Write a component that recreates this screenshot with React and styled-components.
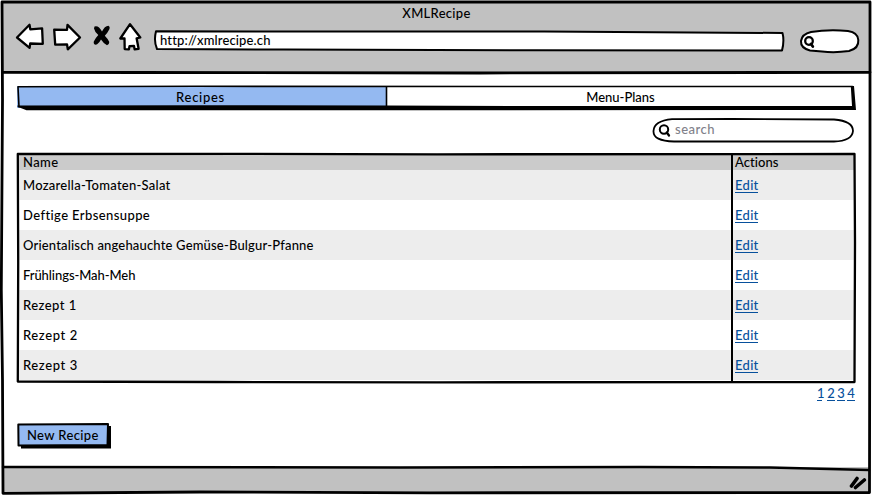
import React from 'react';
import styled, { createGlobalStyle } from 'styled-components';

const GlobalStyle = createGlobalStyle`
  * { box-sizing: border-box; }
  body { margin: 0; background: #fff; }
`;

const Browser = styled.div`
  position: relative;
  width: 872px;
  height: 495px;
  display: flex;
  flex-direction: column;
  padding: 2px 3px;
  background: #fff;
  color: #000;
  font: 500 13px/16px Lato, sans-serif;
  font-variant-ligatures: none;
`;

/* Hand-drawn outline laid over the box it decorates. */
const Sketch = styled.svg`
  position: absolute;
  inset: 0;
  width: 100%;
  height: 100%;
  overflow: visible;
  pointer-events: none;
  fill: none;
  stroke: #000;
  stroke-width: 2;
  stroke-linejoin: round;
  stroke-linecap: round;
`;

const Text = styled.span`
  position: relative;
  letter-spacing: ${(p) => p.$track || 0}px;
  white-space: pre;
`;

const Chrome = styled.header`
  height: 70px;
  background: #c1c1c1;
`;

const Title = styled.h1`
  margin: 0;
  padding: 3px 0 0 1px;
  height: 20px;
  font: inherit;
  text-align: center;
`;

const Toolbar = styled.div`
  display: flex;
  align-items: flex-start;
  padding-left: 12px;
`;

const NavIcons = styled.svg`
  width: 128px;
  height: 34px;
  margin-right: 11px;
  fill: #fff;
  stroke: #000;
  stroke-width: 2.3;
  stroke-linejoin: round;
  stroke-linecap: round;
`;

const Address = styled.div`
  position: relative;
  width: 630px;
  height: 20px;
  margin-top: 9px;
  padding: 1px 6px;
`;

const BrowserSearch = styled.div`
  position: relative;
  width: 60px;
  height: 25px;
  margin: 7px 0 0 16px;
`;

const Main = styled.main`
  height: 395px;
  padding: 14px 13px 0 14px;
`;

const Tabs = styled.nav`
  position: relative;
  display: grid;
  grid-template-columns: 369px 469px;
  height: 24px;
`;

const Tab = styled.div`
  height: 22px;
  padding-top: 3px;
  padding-right: ${(p) => (p.$active ? 2 : 0)}px;
  text-align: center;
  background: ${(p) => (p.$active ? '#94b9f1' : '#fff')};
`;

const SearchRow = styled.div`
  display: flex;
  justify-content: flex-end;
  padding: 8px 2px 0 0;
`;

const SearchBox = styled.div`
  position: relative;
  width: 202px;
  height: 25px;
  padding: 3px 0 0 23px;
  color: #81818a;
`;

const Table = styled.div`
  position: relative;
  width: 839px;
  height: 230px;
  margin-top: 10px;
  padding: 1px 2px;
`;

const Row = styled.div`
  display: grid;
  grid-template-columns: 714px 1fr;
  align-items: ${(p) => (p.$head ? 'end' : 'center')};
  height: ${(p) => (p.$head ? 16 : 30)}px;
  background: ${(p) => (p.$head ? '#cbcbcb' : p.$shaded ? '#ededed' : '#fff')};
`;

const Cell = styled.div`
  padding-left: ${(p) => (p.$action ? 2 : 4)}px;
  line-height: 16px;
`;

const Link = styled.a`
  display: inline-block;
  height: 16px;
  line-height: 16px;
  width: ${(p) => p.$width || 23}px;
  border-bottom: 1px solid #07509c;
  color: #07509c;
  letter-spacing: ${(p) => p.$track || 0}px;
  text-align: center;
  white-space: pre;
`;

const Pager = styled.div`
  display: flex;
  gap: 2px;
  justify-content: flex-end;
  height: 18px;
  padding-top: 2px;
  margin-right: 1px;

  a:first-child { margin-right: 3px; }
`;

const Button = styled.button`
  position: relative;
  display: block;
  width: 93px;
  height: 25px;
  margin: 22px 0 0;
  padding: 0 0 2px 10px;
  border: 0;
  background: transparent;
  color: #000;
  font: inherit;
  text-align: left;
`;

const StatusBar = styled.footer`
  position: relative;
  flex: 1;
  background: #c1c1c1;
`;

const Grip = styled.svg`
  position: absolute;
  right: 1px;
  bottom: 3px;
  width: 20px;
  height: 17px;
  stroke: #000;
  stroke-width: 3.6;
  stroke-linecap: round;
  fill: none;
`;

const recipes = [
  ['Mozarella-Tomaten-Salat', 0.25],
  ['Deftige Erbsensuppe', 0.4],
  ['Orientalisch angehauchte Gemüse-Bulgur-Pfanne', 0.17],
  ['Frühlings-Mah-Meh', -0.07],
  ['Rezept 1', 0.45],
  ['Rezept 2', 0.6],
  ['Rezept 3', 0.6],
];

export default function App() {
  return (
    <>
      <GlobalStyle />
      <Browser>
        <Chrome>
          <Title><Text $track={0.3}>XMLRecipe</Text></Title>
          <Toolbar>
            <NavIcons viewBox="15 22 128 34">
              <path d="M17 37.5L29.500 24.800l.8 4.500 11.800-1 .7 15.500-12.600-.3-.6 4.300z" />
              <path d="M54.200 29.700l12.800.2.500-5L80 37.500 67.800 49.300l-.8-5-11.800.3z" />
              <path stroke="none" fill="#000" d="M94.500 26.500Q98.500 25 102 31.500 104.500 26 108.500 25.700 110.300 26.500 109.500 29 107.500 33 104.800 35.800 108 39 109.300 42 109.300 44.700 107 45.200 103.500 43.500 101 39.500 98.500 44 95.800 44.800 93.200 44.500 93.800 41.500 95.500 38 98.300 35 94.500 31.500 94 28.500z" />
              <path d="M130 24.200l10.300 13.300-3.700.8 2 10.500-4 .6-.6-3.400-4.500.2-.6 3.200-4.200-.3-.2-10.800-4.200.2z" />
            </NavIcons>
            <Address>
              <Sketch viewBox="0 0 630 20">
                <path fill="#fff" d="M2 .2L140 .5 390 .5 628.500 2Q630.500 10 628 19.500L380 19.300 130 18.500 3 18Q-.500 10 2 .2z" />
              </Sketch>
              <Text $track={0.14}>http://xmlrecipe.ch</Text>
            </Address>
            <BrowserSearch>
              <Sketch viewBox="0 0 60 25">
                <path fill="#fff" d="M11 3Q28 .3 48 2 58 3.500 58.300 11 59 19.500 49 22 35 24 22 22.500L10 21.500Q.500 19 1 12 2 5 11 3z" />
                <circle cx="9" cy="12" r="3.800" strokeWidth="2.300" />
                <path d="M11 15l1.800 2.500" strokeWidth="2.800" />
              </Sketch>
            </BrowserSearch>
          </Toolbar>
        </Chrome>
        <Main>
          <Tabs>
            <Tab $active><Text $track={0.7}>Recipes</Text></Tab>
            <Tab><Text>Menu-Plans</Text></Tab>
            <Sketch viewBox="0 0 838 24">
              <path d="M.5 .8L180 .3 500 .5 835 .5M.5 1L1.500 21M369 1V23" strokeWidth="1.600" />
              <path fill="#000" stroke="none" d="M0 19.500L180 19.300 369 19.500 500 20 834.500 20 833.300 0 836.500 0 838.500 24 400 24.300 9 24.300 0 20.800z" />
            </Sketch>
          </Tabs>
          <SearchRow>
            <SearchBox>
              <Sketch viewBox="0 0 202 25">
                <path d="M20 1.200L80 1 182 1.500Q201 3 201 13 200 23 182 23.500L22 23.500Q1 23 1.500 13 2 3 20 1.200z" strokeWidth="1.800" />
                <circle cx="12" cy="11.500" r="4.200" />
                <path d="M14.800 14.500l2.200 3" strokeWidth="2.300" />
              </Sketch>
              <Text $track={0.5}>search</Text>
            </SearchBox>
          </SearchRow>
          <Table>
            <Row $head>
              <Cell><Text $track={0.4}>Name</Text></Cell>
              <Cell $action><Text $track={0.05}>Actions</Text></Cell>
            </Row>
            {recipes.map(([name, track], i) => (
              <Row key={name} $shaded={i % 2 === 0}>
                <Cell><Text $track={track}>{name}</Text></Cell>
                <Cell $action><Link $track={0.3}>Edit</Link></Cell>
              </Row>
            ))}
            <Sketch viewBox="0 0 839 230">
              <path d="M.8 1L230 .8 420 1.300 837.500 1 838 90 837.500 229 420 229.300 200 229 .8 228.500 1.200 110z" strokeWidth="2.300" />
              <path d="M715 1V229" />
            </Sketch>
          </Table>
          <Pager>
            <Link $width={5}>1</Link>
            <Link $width={8}>2</Link>
            <Link $width={8}>3</Link>
            <Link $width={8}>4</Link>
          </Pager>
          <Button>
            <Sketch viewBox="0 0 93 25">
              <path fill="#000" stroke="none" d="M4 3H94V25.500H4z" />
              <path fill="#94b9f1" d="M1.300 1.500L50 1.300 91 1 90.500 22 1.500 22.500z" />
            </Sketch>
            <Text $track={0.36}>New Recipe</Text>
          </Button>
        </Main>
        <StatusBar>
          <Grip viewBox="0 0 20 17">
            <path d="M3.500 13L9 5.500M7.500 14.500L16.300 7" />
          </Grip>
        </StatusBar>
        <Sketch viewBox="0 0 872 495">
          <path strokeWidth="2.800" d="M2 2L450 2 870 2 870 150 869.500 492.500 430 492.800 200 492 3 493.300 2.500 380 1.300 290 2.500 100z" />
          <path strokeWidth="2.800" d="M3 72.300L140 72.500 480 73 870 72.300" />
          <path strokeWidth="2.400" d="M3 467L400 467.500 640 467 770 467.500 869 470" />
        </Sketch>
      </Browser>
    </>
  );
}
